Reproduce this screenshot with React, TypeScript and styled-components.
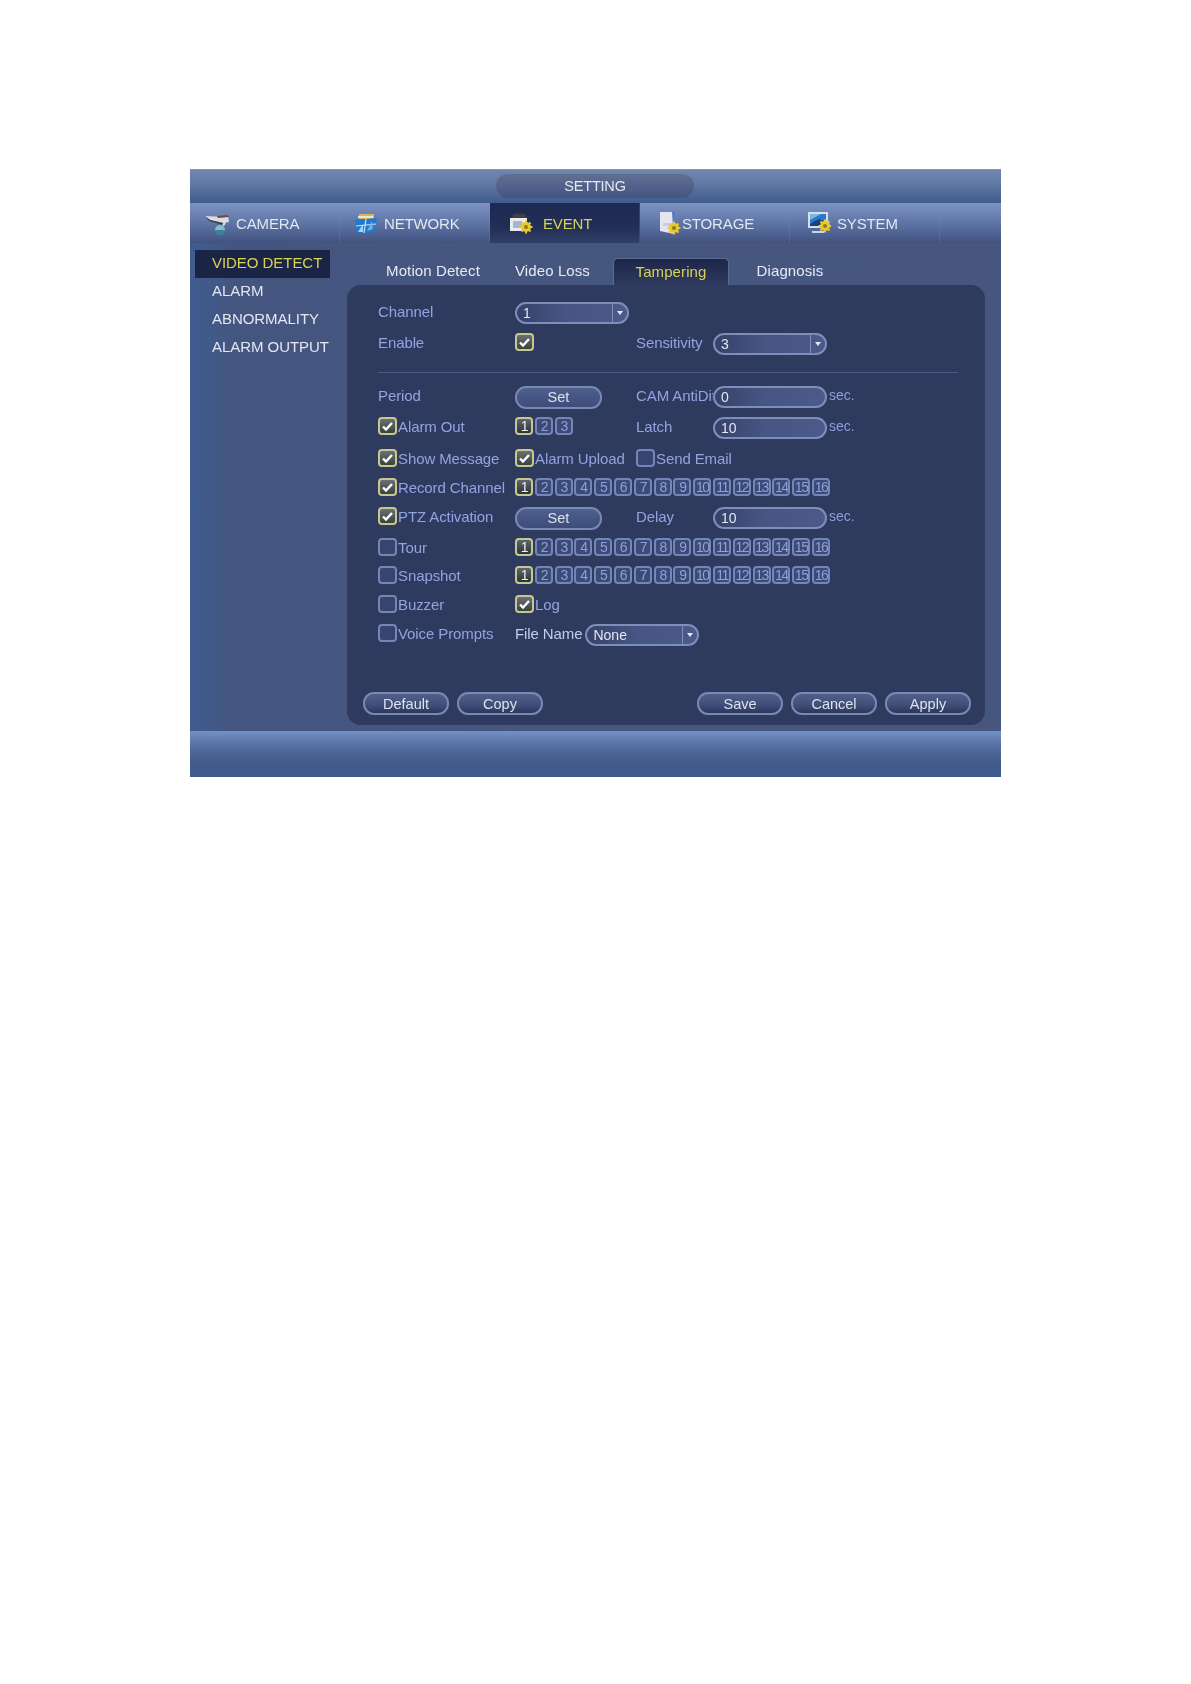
import styled, { createGlobalStyle } from "styled-components";

const GlobalStyle = createGlobalStyle`
  html, body {
    margin: 0;
    padding: 0;
    background: #fff;
  }
  body {
    min-height: 1684px;
    font-family: "Liberation Sans", Arial, sans-serif;
  }
`;

const Frame = styled.div`
  width: 811px;
  height: 608px;
  margin: 169px 0 0 190px;
  display: flex;
  flex-direction: column;
  box-sizing: border-box;
  border-top: 1px solid #8c949f;
  background: #44557f;
  filter: blur(0.6px);
`;

const TitleBar = styled.div`
  height: 33px;
  flex: none;
  display: flex;
  justify-content: center;
  padding-top: 4px;
  box-sizing: border-box;
  background: linear-gradient(#7186ad, #5f78a4 45%, #3f5b8d);
`;

const TitlePill = styled.div`
  width: 198px;
  height: 24px;
  margin-left: -1px;
  border-radius: 12px;
  display: flex;
  align-items: center;
  justify-content: center;
  font-size: 14.5px;
  letter-spacing: -0.2px;
  color: #e4e8f0;
  background: linear-gradient(#626f92, #51618c 55%, #43547f);
`;

const TabBar = styled.div`
  height: 40px;
  flex: none;
  display: flex;
  background: linear-gradient(#7c93c4, #5e75a6 50%, #42527f);
`;

const MainTab = styled.div<{ $active?: boolean; $iconGap: number; $pad: number }>`
  width: 150px;
  display: flex;
  align-items: center;
  box-sizing: border-box;
  padding: 1px 0 0 ${({ $pad }) => $pad}px;
  gap: ${({ $iconGap }) => $iconGap}px;
  font-size: 15px;
  letter-spacing: -0.15px;
  color: ${({ $active }) => ($active ? "#d8d356" : "#e2e7f2")};
  background: ${({ $active }) =>
    $active ? "linear-gradient(#1d2950, #222e55 60%, #313e66)" : "none"};
  border-right: 1px solid rgba(120, 140, 185, 0.25);
`;

const Body = styled.div`
  flex: 1;
  display: flex;
  min-height: 0;
  background: linear-gradient(90deg, #3f5c92, #44567f 5%, #46567f);
`;

const Sidebar = styled.div`
  width: 157px;
  flex: none;
  box-sizing: border-box;
  padding: 7px 0 0 5px;
  display: flex;
  flex-direction: column;
`;

const SideItem = styled.div<{ $active?: boolean }>`
  width: 135px;
  height: 28px;
  flex: none;
  box-sizing: border-box;
  padding: 0 0 4px 17px;
  display: flex;
  align-items: center;
  white-space: nowrap;
  font-size: 15px;
  letter-spacing: -0.05px;
  color: ${({ $active }) => ($active ? "#d8d356" : "#e2e7f2")};
  background: ${({ $active }) => ($active ? "#1a2444" : "none")};
`;

const Content = styled.div`
  width: 638px;
  flex: none;
  display: flex;
  flex-direction: column;
  padding: 15px 0 6px;
`;

const SubTabs = styled.div`
  height: 27px;
  flex: none;
  display: flex;
  padding-left: 27px;
`;

const SubTab = styled.div<{ $active?: boolean; $width: number }>`
  width: ${({ $width }) => $width}px;
  flex: none;
  box-sizing: border-box;
  display: flex;
  align-items: center;
  justify-content: center;
  padding-bottom: 2px;
  font-size: 15px;
  letter-spacing: 0.1px;
  color: ${({ $active }) => ($active ? "#d8d356" : "#e6eaf4")};
  border-radius: 5px 5px 0 0;
  ${({ $active }) =>
    $active &&
    `background: linear-gradient(#1b2648, #2f3a5f);
     border: 1px solid #5a6a93;
     border-bottom: none;`}
`;

const Panel = styled.div`
  flex: 1;
  display: flex;
  flex-direction: column;
  border-radius: 14px;
  box-sizing: border-box;
  padding: 12px 0 10px 31px;
  background: #2f3a5f;
`;

const Row = styled.div<{ $top?: number }>`
  height: 28px;
  flex: none;
  margin-top: ${({ $top }) => $top ?? 0}px;
  display: grid;
  grid-template-columns: 137px 121px 77px 1fr;
  align-items: center;
`;

const Divider = styled.div`
  width: 580px;
  height: 1px;
  flex: none;
  margin: 16px 0 8px;
  background: #4c5a82;
`;

const Label = styled.div`
  font-size: 15px;
  letter-spacing: -0.1px;
  color: #93a3e0;
  white-space: nowrap;
  overflow: hidden;
`;

const LightLabel = styled(Label)`
  color: #c4cdf0;
  overflow: visible;
`;

const CheckCell = styled.div<{ $span?: number }>`
  display: flex;
  align-items: center;
  gap: 1px;
  grid-column: span ${({ $span }) => $span ?? 1};
`;

const Box = styled.div<{ $on?: boolean }>`
  width: 19px;
  height: 18px;
  flex: none;
  box-sizing: border-box;
  border-radius: 4px;
  display: flex;
  align-items: center;
  justify-content: center;
  border: 2px solid ${({ $on }) => ($on ? "#c7c88e" : "#7485b8")};
  background: ${({ $on }) =>
    $on ? "linear-gradient(#6a6f74, #3a4340)" : "#37446f"};
`;

const Numbers = styled.div<{ $span: number }>`
  grid-column: span ${({ $span }) => $span};
  display: flex;
  gap: 1.8px;
`;

const NumberBox = styled.div<{ $on?: boolean }>`
  width: 18px;
  height: 18px;
  flex: none;
  box-sizing: border-box;
  border-radius: 4px;
  display: flex;
  align-items: center;
  justify-content: center;
  font-size: 14px;
  letter-spacing: -1.5px;
  color: ${({ $on }) => ($on ? "#f0f0e4" : "#8ea0d8")};
  border: 2px solid ${({ $on }) => ($on ? "#c7c88e" : "#7485b8")};
  background: ${({ $on }) =>
    $on ? "linear-gradient(#5d6570, #2c343c)" : "#3c4a78"};
`;

const Field = styled.div<{ $width?: number }>`
  width: ${({ $width }) => $width ?? 114}px;
  height: 22px;
  margin-top: 4px;
  flex: none;
  box-sizing: border-box;
  border: 2px solid #7d8ebb;
  border-radius: 11px;
  display: flex;
  align-items: center;
  padding-left: 6px;
  font-size: 14px;
  color: #e2e6f2;
  background: linear-gradient(90deg, #364268, #465583 45%, #4b5a88);
`;

const FieldValue = styled.div`
  flex: 1;
`;

const Arrow = styled.div`
  width: 14px;
  height: 100%;
  flex: none;
  border-left: 1px solid #7d8ebb;
  display: flex;
  align-items: center;
  justify-content: center;
  &::before {
    content: "";
    border: 3px solid transparent;
    border-top: 4px solid #e6eaf4;
    border-bottom: none;
  }
`;

const FieldWithUnit = styled.div`
  display: flex;
  align-items: center;
`;

const Unit = styled.div`
  margin-left: 2px;
  font-size: 14px;
  color: #8d9ddc;
`;

const FileCell = styled.div`
  grid-column: span 3;
  display: flex;
  align-items: center;
  gap: 3px;
`;

const PillButton = styled.div<{ $light?: boolean }>`
  width: ${({ $light }) => ($light ? 87 : 86)}px;
  height: 23px;
  flex: none;
  box-sizing: border-box;
  border: 2px solid #7889b6;
  border-radius: 11px;
  display: flex;
  align-items: center;
  justify-content: center;
  font-size: 14.5px;
  color: #dde2ee;
  background: ${({ $light }) =>
    $light
      ? "linear-gradient(#4e5f8e, #3d4c79)"
      : "linear-gradient(#515f88, #3f4d78 60%, #2c3759)"};
`;

const SetButton = styled(PillButton)`
  margin-top: 4px;
`;

const Footer = styled.div`
  margin-top: auto;
  margin-left: -15px;
  width: 608px;
  display: flex;
  gap: 8px;
`;

const Spacer = styled.div`
  flex: 1;
`;

const BottomBar = styled.div`
  height: 46px;
  flex: none;
  background: linear-gradient(#7291c6, #526d9f 35%, #43598a 70%, #3f5b90);
`;

const Check = () => (
  <svg width="13" height="11" viewBox="0 0 13 11">
    <path d="M2 5.5 L5 8.5 L11 2" fill="none" stroke="#fff" strokeWidth="2.4" />
  </svg>
);

const Gear = ({ x, y }: { x: number; y: number }) => (
  <g transform={`translate(${x} ${y})`}>
    <circle r="5" fill="#e8c92e" />
    <path d="M0-6.5V6.5M-6.5 0H6.5M-4.5-4.5L4.5 4.5M-4.5 4.5L4.5-4.5" stroke="#e8c92e" strokeWidth="2" />
    <circle r="2" fill="#8f7c1a" />
  </g>
);

const CameraIcon = () => (
  <svg width="27" height="24" viewBox="0 0 27 24">
    <path d="M1 4 L20 5 L24 3 L25 10 L19 11 L6 8 Z" fill="#d9dde3" />
    <path d="M1 4 L6 8 L19 11 L19 13 L5 9 Z" fill="#3a3f48" />
    <path d="M13 4 L24 3 L25 5 L14 6 Z" fill="#6b4a44" />
    <path d="M21 10 L19 14 L15 15" fill="none" stroke="#dfe3ea" strokeWidth="2" />
    <circle cx="16" cy="18" r="5.5" fill="#3d7f9c" />
    <path d="M11 18 A5 5 0 0 1 21 18 Z" fill="#86bccc" />
  </svg>
);

const NetworkIcon = () => (
  <svg width="24" height="23" viewBox="0 0 24 23">
    <path d="M5 2 H20 V7 H5 Z" fill="#d8b25c" />
    <path d="M4 4 H19 V6 H4 Z" fill="#e9e4d2" />
    <path d="M1 8 L23 6 L20 20 L3 22 Z" fill="#1f79cf" />
    <path d="M12 7 L10 21 M2 14 L22 12" stroke="#cfe2f3" strokeWidth="1.2" />
    <path d="M4 20 L9 12 L9 20 Z" fill="#a9d2f0" />
    <path d="M13 19 L18 9 L19 17 Z" fill="#6fb0e4" />
  </svg>
);

const EventIcon = () => (
  <svg width="24" height="23" viewBox="0 0 24 23">
    <path d="M4 2 H16 L18 6 H3 Z" fill="#3b3f46" />
    <rect x="1" y="6" width="17" height="13" fill="#e8ecf2" />
    <rect x="4" y="9" width="9" height="7" fill="#a8b4ca" />
    <Gear x={17} y={15} />
  </svg>
);

const StorageIcon = () => (
  <svg width="22" height="25" viewBox="0 0 22 25">
    <path d="M1 1 H13 L15 5 V23 L1 20 Z" fill="#e3e6ee" />
    <path d="M13 1 H16 V18 H14 Z" fill="#5a79c2" />
    <path d="M4 12 H11 V15 H4 Z" fill="#c9cedb" />
    <Gear x={15} y={17} />
  </svg>
);

const SystemIcon = () => (
  <svg width="24" height="25" viewBox="0 0 24 25">
    <rect x="1" y="1" width="20" height="16" fill="#d6dce8" />
    <rect x="3" y="3" width="16" height="12" fill="#2a78c8" />
    <path d="M3 13 L12 8 L19 11 V15 H3 Z" fill="#17407e" />
    <path d="M3 3 H14 L3 9 Z" fill="#7db6e6" />
    <path d="M5 21 H17" stroke="#ccd3e2" strokeWidth="2" />
    <Gear x={18} y={15} />
  </svg>
);

const CheckBox = ({ on, children, span }: { on?: boolean; children: string; span?: number }) => (
  <CheckCell $span={span}>
    <Box $on={on}>{on && <Check />}</Box>
    <Label>{children}</Label>
  </CheckCell>
);

const NumberRow = ({ count, span }: { count: number; span: number }) => (
  <Numbers $span={span}>
    {Array.from({ length: count }, (_, i) => (
      <NumberBox key={i} $on={i === 0}>
        {i + 1}
      </NumberBox>
    ))}
  </Numbers>
);

const SecField = ({ value }: { value: string }) => (
  <FieldWithUnit>
    <Field>
      <FieldValue>{value}</FieldValue>
    </Field>
    <Unit>sec.</Unit>
  </FieldWithUnit>
);

const SelectField = ({ value }: { value: string }) => (
  <Field>
    <FieldValue>{value}</FieldValue>
    <Arrow />
  </Field>
);

const tabs = [
  { name: "CAMERA", icon: <CameraIcon />, pad: 14, gap: 5 },
  { name: "NETWORK", icon: <NetworkIcon />, pad: 14, gap: 6 },
  { name: "EVENT", icon: <EventIcon />, pad: 19, gap: 10, active: true },
  { name: "STORAGE", icon: <StorageIcon />, pad: 19, gap: 1 },
  { name: "SYSTEM", icon: <SystemIcon />, pad: 17, gap: 6 },
];

const sideItems = ["VIDEO DETECT", "ALARM", "ABNORMALITY", "ALARM OUTPUT"];

const subTabs = [
  { name: "Motion Detect", width: 118 },
  { name: "Video Loss", width: 121 },
  { name: "Tampering", width: 116, active: true },
  { name: "Diagnosis", width: 122 },
];

export default function App() {
  return (
    <>
      <GlobalStyle />
      <Frame>
        <TitleBar>
          <TitlePill>SETTING</TitlePill>
        </TitleBar>
        <TabBar>
          {tabs.map((tab) => (
            <MainTab key={tab.name} $active={tab.active} $pad={tab.pad} $iconGap={tab.gap}>
              {tab.icon}
              {tab.name}
            </MainTab>
          ))}
        </TabBar>
        <Body>
          <Sidebar>
            {sideItems.map((item, i) => (
              <SideItem key={item} $active={i === 0}>
                {item}
              </SideItem>
            ))}
          </Sidebar>
          <Content>
            <SubTabs>
              {subTabs.map((tab) => (
                <SubTab key={tab.name} $width={tab.width} $active={tab.active}>
                  {tab.name}
                </SubTab>
              ))}
            </SubTabs>
            <Panel>
              <Row>
                <Label>Channel</Label>
                <SelectField value="1" />
              </Row>
              <Row $top={3}>
                <Label>Enable</Label>
                <CheckCell>
                  <Box $on>
                    <Check />
                  </Box>
                </CheckCell>
                <Label>Sensitivity</Label>
                <SelectField value="3" />
              </Row>
              <Divider />
              <Row>
                <Label>Period</Label>
                <CheckCell>
                  <SetButton $light>Set</SetButton>
                </CheckCell>
                <Label>CAM AntiDither</Label>
                <SecField value="0" />
              </Row>
              <Row $top={3}>
                <CheckBox on>Alarm Out</CheckBox>
                <NumberRow count={3} span={1} />
                <Label>Latch</Label>
                <SecField value="10" />
              </Row>
              <Row $top={4}>
                <CheckBox on>Show Message</CheckBox>
                <CheckBox on>Alarm Upload</CheckBox>
                <CheckBox span={2}>Send Email</CheckBox>
              </Row>
              <Row $top={1}>
                <CheckBox on>Record Channel</CheckBox>
                <NumberRow count={16} span={3} />
              </Row>
              <Row $top={1}>
                <CheckBox on>PTZ Activation</CheckBox>
                <CheckCell>
                  <SetButton $light>Set</SetButton>
                </CheckCell>
                <Label>Delay</Label>
                <SecField value="10" />
              </Row>
              <Row $top={3}>
                <CheckBox>Tour</CheckBox>
                <NumberRow count={16} span={3} />
              </Row>
              <Row>
                <CheckBox>Snapshot</CheckBox>
                <NumberRow count={16} span={3} />
              </Row>
              <Row $top={1}>
                <CheckBox>Buzzer</CheckBox>
                <CheckBox on>Log</CheckBox>
              </Row>
              <Row $top={1}>
                <CheckBox>Voice Prompts</CheckBox>
                <FileCell>
                  <LightLabel>File Name</LightLabel>
                  <SelectField value="None" />
                </FileCell>
              </Row>
              <Footer>
                <PillButton>Default</PillButton>
                <PillButton>Copy</PillButton>
                <Spacer />
                <PillButton>Save</PillButton>
                <PillButton>Cancel</PillButton>
                <PillButton>Apply</PillButton>
              </Footer>
            </Panel>
          </Content>
        </Body>
        <BottomBar />
      </Frame>
    </>
  );
}
